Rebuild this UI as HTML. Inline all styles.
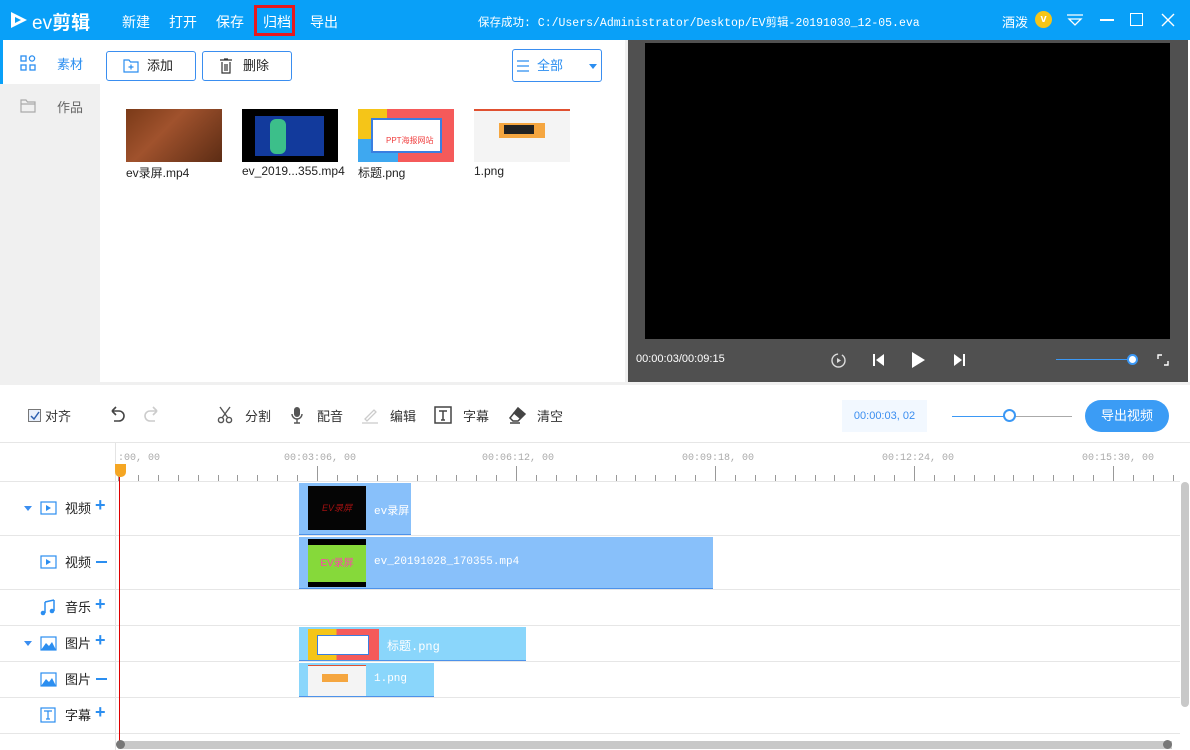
<!DOCTYPE html>
<html><head><meta charset="utf-8">
<style>
*{margin:0;padding:0;box-sizing:border-box}
body{width:1190px;height:750px;position:relative;overflow:hidden;background:#fff;font-family:"Liberation Sans","Noto Sans CJK SC",sans-serif;font-size:13px;color:#222}
.a{position:absolute}
.mono{font-family:"Liberation Mono","Noto Sans CJK SC",monospace}
.top{left:0;top:0;width:1190px;height:40px;background:#09a0f8;color:#fff}
.menu{top:12px;font-size:14px}
.btn{border:1px solid #3a8ef0;border-radius:3px;background:#fff;height:30px;top:51px;font-size:13px;line-height:28px}
.thumb{top:109px;width:96px;height:53px}
.cap{top:164px;font-size:12px}
.tl{font-size:13px;color:#333}
.hl{left:0;width:1180px;height:1px;background:#e6e6e6}
.lab{left:65px;font-size:13px}
.plus{color:#2b8ef0;font-size:18px;font-weight:bold;left:95px}
.clip{background:#88c0fa;border-bottom:1px solid #4d92ea}
.clipI{background:#8ad6fb;border-bottom:1px solid #4d92ea}
.ctext{color:#fff;font-size:11px;font-family:"Liberation Mono","Noto Sans CJK SC",monospace}
.tick{width:1px;background:#999;top:475px;height:6px}
.maj{top:466px;height:15px}
.rl{top:453px;font-size:10px;color:#aaa;font-family:"Liberation Mono",monospace}
.ticon{top:406px}
.tt{top:406px;font-size:13px;color:#333}
</style></head><body>
<div class="a top">
  <svg class="a" style="left:9px;top:10px" width="20" height="20" viewBox="0 0 20 20"><path d="M2 2 L18 10 L2 18 Z" fill="#fff"/><path d="M6 7 L12 10 L6 13Z" fill="#09a0f8"/></svg>
  <div class="a" style="left:32px;top:8px;font-size:19px"><span style="font-weight:normal">ev</span><b>剪辑</b></div>
  <div class="a menu" style="left:122px">新建</div>
  <div class="a menu" style="left:169px">打开</div>
  <div class="a menu" style="left:216px">保存</div>
  <div class="a" style="left:254px;top:5px;width:41px;height:31px;border:3px solid #e8191f"></div>
  <div class="a menu" style="left:263px">归档</div>
  <div class="a menu" style="left:310px">导出</div>
  <div class="a mono" style="left:478px;top:14px;font-size:11.5px">保存成功: C:/Users/Administrator/Desktop/EV剪辑-20191030_12-05.eva</div>
  <div class="a" style="left:1002px;top:12px;font-size:13px">酒泼</div>
  <div class="a" style="left:1035px;top:11px;width:17px;height:17px;border-radius:50%;background:#f5c518;color:#fff;font-size:11px;font-weight:bold;text-align:center;line-height:17px">v</div>
  <svg class="a" style="left:1066px;top:14px" width="18" height="12"><path d="M1 1H17M3 5H15L9 11Z" stroke="#fff" fill="none" stroke-width="1.3"/></svg>
  <div class="a" style="left:1100px;top:19px;width:14px;height:1.5px;background:#fff"></div>
  <div class="a" style="left:1130px;top:13px;width:13px;height:13px;border:1.5px solid #fff"></div>
  <svg class="a" style="left:1161px;top:13px" width="14" height="14"><path d="M1 1L13 13M13 1L1 13" stroke="#fff" stroke-width="1.4"/></svg>
</div>
<div class="a" style="left:0;top:40px;width:100px;height:342px;background:#f0f0f0"></div>
<div class="a" style="left:0;top:40px;width:100px;height:44px;background:#fff;border-left:3px solid #09a0f8"></div>
<svg class="a" style="left:20px;top:55px" width="16" height="16"><g fill="none" stroke="#2b8ef0" stroke-width="1.3"><rect x="1" y="1" width="5" height="5"/><circle cx="12" cy="3.5" r="2.6"/><rect x="1" y="10" width="5" height="5"/><rect x="10" y="10" width="5" height="5"/></g></svg>
<div class="a" style="left:57px;top:54px;color:#2b8ef0;font-size:13px">素材</div>
<svg class="a" style="left:20px;top:99px" width="16" height="14"><path d="M1 1H6L7.5 3H15V13H1Z M1 5H15" fill="none" stroke="#aaa" stroke-width="1.2"/></svg>
<div class="a" style="left:57px;top:97px;color:#666;font-size:13px">作品</div>
<div class="a btn" style="left:106px;width:90px"><svg class="a" style="left:16px;top:7px" width="16" height="14"><path d="M1 1H6L7.5 3H15V13H1Z" fill="none" stroke="#2b8ef0" stroke-width="1.2"/><path d="M8 5.5V10.5M5.5 8H10.5" stroke="#2b8ef0" stroke-width="1.2"/></svg><span class="a" style="left:40px">添加</span></div>
<div class="a btn" style="left:202px;width:90px"><svg class="a" style="left:16px;top:6px" width="14" height="16"><path d="M1 2H13M5 1H9M3 4V15H11V4M6 6V13M8 6V13" fill="none" stroke="#333" stroke-width="1.2"/></svg><span class="a" style="left:40px">删除</span></div>
<div class="a btn" style="left:512px;width:90px;top:49px;height:33px;line-height:31px"><svg class="a" style="left:4px;top:10px" width="12" height="12"><path d="M0 1H12M0 6H12M0 11H12" stroke="#2b8ef0" stroke-width="1.2"/></svg><span class="a" style="left:24px;color:#2b8ef0">全部</span><div class="a" style="left:76px;top:14px;border:4px solid transparent;border-top:5px solid #2b8ef0"></div></div>

<div class="a thumb" style="left:126px;background:linear-gradient(135deg,#7a3a18,#a0522d 40%,#5c2c14);"></div>
<div class="a thumb" style="left:242px;background:#000"><div class="a" style="left:13px;top:7px;width:69px;height:40px;background:#123a9c"></div><div class="a" style="left:28px;top:10px;width:16px;height:35px;background:#3cbf8a;border-radius:6px"></div></div>
<div class="a thumb" style="left:358px;background:linear-gradient(90deg,#f5c518 30%,#f55a5a 30%)"><div class="a" style="left:0;top:30px;width:40px;height:23px;background:#3ea8f0"></div><div class="a" style="left:13px;top:9px;width:71px;height:35px;background:#fff;border:2px solid #3a7ee0"></div><div class="a" style="left:28px;top:26px;font-size:8px;color:#f04040">PPT海报网站</div></div>
<div class="a thumb" style="left:474px;background:#f4f4f4;border-top:2px solid #e05030"><div class="a" style="left:25px;top:12px;width:46px;height:15px;background:#f5a640"></div><div class="a" style="left:30px;top:14px;width:30px;height:9px;background:#222"></div></div>
<div class="a cap" style="left:126px">ev录屏.mp4</div>
<div class="a cap" style="left:242px">ev_2019...355.mp4</div>
<div class="a cap" style="left:358px">标题.png</div>
<div class="a cap" style="left:474px">1.png</div>
<div class="a" style="left:625px;top:40px;width:3px;height:342px;background:#f0f0f0"></div>
<div class="a" style="left:628px;top:40px;width:560px;height:342px;background:#505050"></div>
<div class="a" style="left:645px;top:43px;width:525px;height:296px;background:#000"></div>
<div class="a" style="left:636px;top:353px;color:#fff;font-size:11px">00:00:03/00:09:15</div>
<svg class="a" style="left:830px;top:352px" width="17" height="17"><circle cx="8.5" cy="8.5" r="6.5" fill="none" stroke="#ddd" stroke-width="1.4" stroke-dasharray="30 4"/><path d="M7 6L11 8.5L7 11Z" fill="#ddd"/></svg>
<svg class="a" style="left:872px;top:353px" width="14" height="14"><path d="M2 1V13" stroke="#fff" stroke-width="2"/><path d="M12 1V13L4 7Z" fill="#fff"/></svg>
<svg class="a" style="left:909px;top:351px" width="18" height="18"><path d="M3 1L16 9L3 17Z" fill="#fff"/></svg>
<svg class="a" style="left:952px;top:353px" width="14" height="14"><path d="M2 1V13L10 7Z" fill="#fff"/><path d="M12 1V13" stroke="#fff" stroke-width="2"/></svg>
<div class="a" style="left:1056px;top:359px;width:76px;height:1px;background:#3b98f5"></div>
<div class="a" style="left:1127px;top:354px;width:11px;height:11px;border-radius:50%;background:#fff;border:2px solid #3b98f5"></div>
<svg class="a" style="left:1157px;top:354px" width="12" height="12"><path d="M1 5V1H5M11 7V11H7" fill="none" stroke="#fff" stroke-width="1.4"/></svg>
<div class="a" style="left:0;top:382px;width:1190px;height:3px;background:#f0f0f0"></div>
<div class="a" style="left:28px;top:409px;width:13px;height:13px;border:1px solid #777;background:#e8f0fc"><svg class="a" style="left:1px;top:1px" width="10" height="10"><path d="M1 5L4 8L9 1" fill="none" stroke="#2b5fb0" stroke-width="1.5"/></svg></div>
<div class="a tt" style="left:45px">对齐</div>
<svg class="a ticon" style="left:108px" width="18" height="18"><path d="M4 5H11A5 5 0 0 1 11 15H6M4 5L8 1M4 5L8 9" fill="none" stroke="#444" stroke-width="1.6"/></svg>
<svg class="a ticon" style="left:143px" width="18" height="18"><path d="M14 5H7A5 5 0 0 0 7 15H12M14 5L10 1M14 5L10 9" fill="none" stroke="#ccc" stroke-width="1.6"/></svg>
<svg class="a ticon" style="left:217px" width="16" height="18"><circle cx="4" cy="14" r="2.6" fill="none" stroke="#555" stroke-width="1.4"/><circle cx="12" cy="14" r="2.6" fill="none" stroke="#555" stroke-width="1.4"/><path d="M5 12L13 1M11 12L3 1" stroke="#555" stroke-width="1.4"/></svg>
<div class="a tt" style="left:245px">分割</div>
<svg class="a ticon" style="left:290px" width="14" height="18"><rect x="4" y="1" width="6" height="10" rx="3" fill="#555"/><path d="M2 8A5 5 0 0 0 12 8M7 13V17M4 17H10" fill="none" stroke="#555" stroke-width="1.4"/></svg>
<div class="a tt" style="left:317px">配音</div>
<svg class="a ticon" style="left:361px" width="18" height="18"><path d="M4 13L13 4L15 6L6 15Z" fill="none" stroke="#ccc" stroke-width="1.3"/><path d="M1 17H17" stroke="#ccc" stroke-width="1.3"/></svg>
<div class="a tt" style="left:390px">编辑</div>
<svg class="a ticon" style="left:434px" width="18" height="18"><rect x="1" y="1" width="16" height="16" fill="none" stroke="#444" stroke-width="1.5"/><path d="M5 5H13M9 5V14M7 14H11" stroke="#444" stroke-width="1.5"/></svg>
<div class="a tt" style="left:463px">字幕</div>
<svg class="a ticon" style="left:508px" width="20" height="18"><path d="M10 2L17 8L10 15H5L2 12Z" fill="none" stroke="#444" stroke-width="1.5"/><path d="M10 2L17 8L12 13L5 7Z" fill="#444"/><path d="M2 17H12" stroke="#444" stroke-width="1.5"/></svg>
<div class="a tt" style="left:537px">清空</div>
<div class="a" style="left:842px;top:400px;width:85px;height:32px;background:#f2f8ff;color:#3b8ef0;font-size:11px;line-height:32px;text-align:center">00:00:03, 02</div>
<div class="a" style="left:952px;top:416px;width:58px;height:1px;background:#3b98f5"></div>
<div class="a" style="left:1010px;top:416px;width:62px;height:1px;background:#aaa"></div>
<div class="a" style="left:1003px;top:409px;width:13px;height:13px;border-radius:50%;background:#fff;border:2px solid #3b98f5"></div>
<div class="a" style="left:1085px;top:400px;width:84px;height:32px;border-radius:16px;background:#3b9cf5;color:#fff;font-size:13px;line-height:32px;text-align:center">导出视频</div>
<div class="a hl" style="top:442px;width:1190px"></div>
<div class="a" style="left:115px;top:443px;width:1px;height:307px;background:#e4e4e4"></div>
<div class="a rl" style="left:118px">:00, 00</div>
<div class="a rl" style="left:284px">00:03:06, 00</div>
<div class="a rl" style="left:482px">00:06:12, 00</div>
<div class="a rl" style="left:682px">00:09:18, 00</div>
<div class="a rl" style="left:882px">00:12:24, 00</div>
<div class="a rl" style="left:1082px">00:15:30, 00</div>
<div id="ticks"></div>
<div class="a" style="left:115px;top:464px;width:11px;height:13px;background:#f5a623;border-radius:0 0 5px 5px"></div>
<div class="a hl" style="top:481px"></div>
<div class="a hl" style="top:535px"></div>
<div class="a hl" style="top:589px"></div>
<div class="a hl" style="top:625px"></div>
<div class="a hl" style="top:661px"></div>
<div class="a hl" style="top:697px"></div>
<div class="a hl" style="top:733px"></div>
<div class="a" style="left:24px;top:506px;border:4px solid transparent;border-top:5px solid #3b8ef0"></div>
<div class="a" style="left:24px;top:641px;border:4px solid transparent;border-top:5px solid #3b8ef0"></div>
<svg class="a" style="left:40px;top:501px" width="17" height="14"><rect x="1" y="1" width="15" height="12" fill="none" stroke="#2b8ef0" stroke-width="1.2"/><path d="M6 4L11 7L6 10Z" fill="#2b8ef0"/></svg>
<div class="a lab" style="top:498px">视频</div><div class="a plus" style="top:495px">+</div>
<svg class="a" style="left:40px;top:555px" width="17" height="14"><rect x="1" y="1" width="15" height="12" fill="none" stroke="#2b8ef0" stroke-width="1.2"/><path d="M6 4L11 7L6 10Z" fill="#2b8ef0"/></svg>
<div class="a lab" style="top:552px">视频</div><div class="a" style="left:96px;top:561px;width:11px;height:2px;background:#2b8ef0"></div>
<svg class="a" style="left:40px;top:599px" width="16" height="17"><path d="M5 3V14M14 1V12M5 3L14 1" fill="none" stroke="#2b8ef0" stroke-width="1.5"/><circle cx="3" cy="14" r="2.3" fill="#2b8ef0"/><circle cx="12" cy="12" r="2.3" fill="#2b8ef0"/></svg>
<div class="a lab" style="top:597px">音乐</div><div class="a plus" style="top:594px">+</div>
<svg class="a" style="left:40px;top:636px" width="17" height="15"><rect x="1" y="1" width="15" height="13" fill="none" stroke="#2b8ef0" stroke-width="1.2"/><path d="M1 14L6 7L9 10L12 6L16 14Z" fill="#2b8ef0"/></svg>
<div class="a lab" style="top:633px">图片</div><div class="a plus" style="top:630px">+</div>
<svg class="a" style="left:40px;top:672px" width="17" height="15"><rect x="1" y="1" width="15" height="13" fill="none" stroke="#2b8ef0" stroke-width="1.2"/><path d="M1 14L6 7L9 10L12 6L16 14Z" fill="#2b8ef0"/></svg>
<div class="a lab" style="top:669px">图片</div><div class="a" style="left:96px;top:678px;width:11px;height:2px;background:#2b8ef0"></div>
<svg class="a" style="left:40px;top:707px" width="16" height="16"><rect x="1" y="1" width="14" height="14" fill="none" stroke="#2b8ef0" stroke-width="1.2"/><path d="M4 4H12M8 4V12M6 12H10" stroke="#2b8ef0" stroke-width="1.2"/></svg>
<div class="a lab" style="top:705px">字幕</div><div class="a plus" style="top:702px">+</div>
<div class="a clip" style="left:299px;top:483px;width:112px;height:52px"><div class="a" style="left:9px;top:3px;width:58px;height:44px;background:#050505;color:#a01010;font-size:9px;text-align:center;line-height:44px;font-style:italic">EV录屏</div><div class="a ctext" style="left:75px;top:19px">ev录屏</div></div>
<div class="a clip" style="left:299px;top:537px;width:414px;height:52px"><div class="a" style="left:9px;top:2px;width:58px;height:48px;background:#000"><div class="a" style="left:0;top:6px;width:58px;height:37px;background:#86d93a;color:#f4a;font-size:10px;text-align:center;line-height:37px">EV录屏</div></div><div class="a ctext" style="left:75px;top:19px">ev_20191028_170355.mp4</div></div>
<div class="a clipI" style="left:299px;top:627px;width:227px;height:34px"><div class="a" style="left:9px;top:2px;width:71px;height:31px;background:linear-gradient(90deg,#f5c518 40%,#f55a5a 40%)"><div class="a" style="left:9px;top:6px;width:52px;height:20px;background:#fff;border:1px solid #3a7ee0"></div></div><div class="a ctext" style="left:88px;top:10px;font-size:12px">标题.png</div></div>
<div class="a clipI" style="left:299px;top:663px;width:135px;height:34px"><div class="a" style="left:9px;top:2px;width:58px;height:31px;background:#f4f4f4;border-top:1px solid #e05030"><div class="a" style="left:14px;top:8px;width:26px;height:8px;background:#f5a640"></div></div><div class="a ctext" style="left:75px;top:10px">1.png</div></div>
<div class="a" style="left:119px;top:477px;width:1px;height:268px;background:#d00"></div>
<div class="a" style="left:1181px;top:482px;width:8px;height:225px;background:#c8c8c8;border-radius:4px"></div>
<div class="a" style="left:118px;top:741px;width:1054px;height:8px;background:#c8c8c8"></div>
<div class="a" style="left:116px;top:740px;width:9px;height:9px;border-radius:50%;background:#777"></div>
<div class="a" style="left:1163px;top:740px;width:9px;height:9px;border-radius:50%;background:#777"></div>
<script>
var h='';for(var i=0;i<60;i++){var x=118+i*19.9;if(x>1180)break;var m=i%10==0;h+='<div class="a tick'+(m?' maj':'')+'" style="left:'+Math.round(x)+'px"></div>';}
document.getElementById('ticks').innerHTML=h;
</script>
</body></html>
